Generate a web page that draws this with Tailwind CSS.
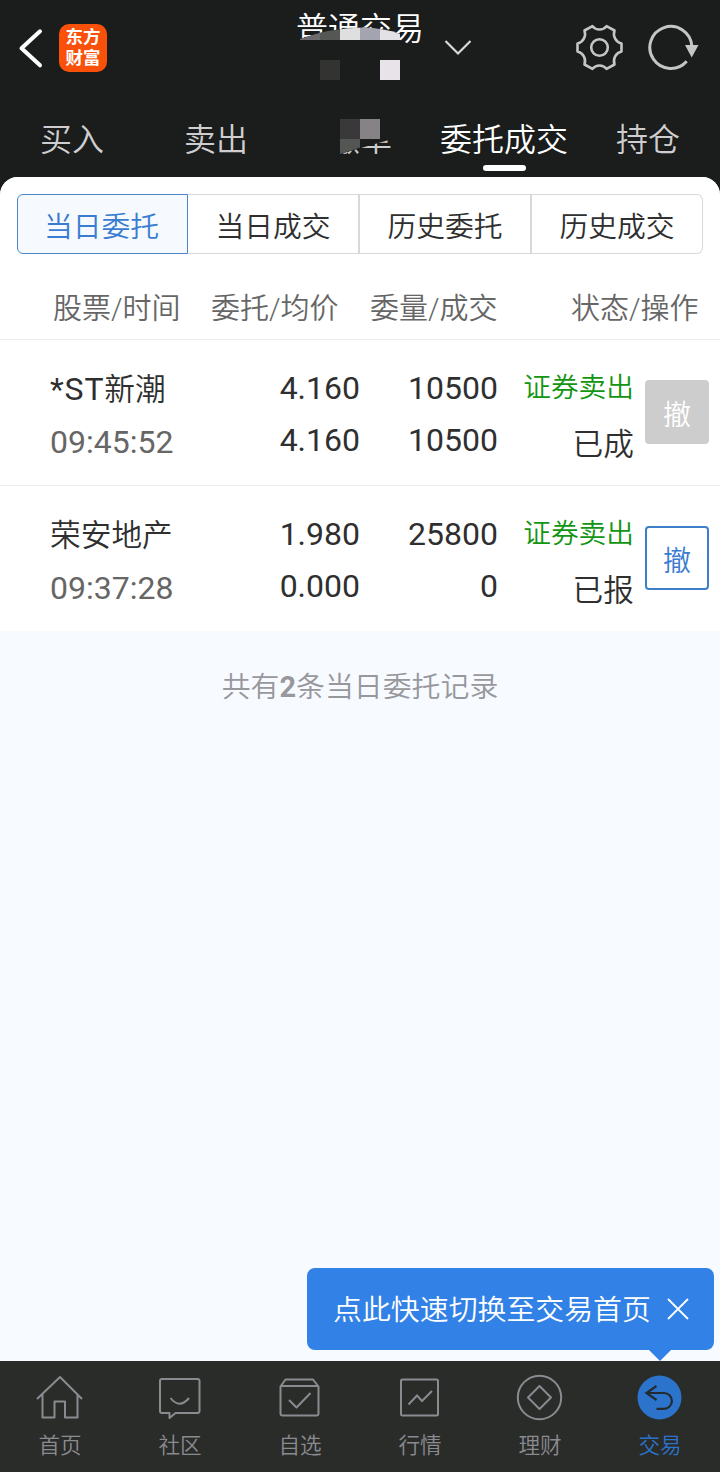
<!DOCTYPE html>
<html lang="zh-CN">
<head>
  <meta charset="UTF-8" />
  <meta name="viewport" content="width=device-width, initial-scale=1" />
  <title>普通交易 - 委托成交</title>
  <script src="https://cdn.jsdelivr.net/npm/@tailwindcss/browser@4"></script>
  <style>
    body {
      font-family: Roboto, "Noto Sans CJK SC", sans-serif;
      font-weight: 350;
    }
    .cjk {
      font-family: "Noto Sans CJK SC", sans-serif;
    }
  </style>
</head>
<body>
  <div class="w-[720px] h-[1472px] flex flex-col bg-[#1a1d1b] overflow-hidden">

    <!-- top bar -->
    <header class="cjk relative h-[177px] flex flex-col">
      <div class="h-[96px] flex items-center">
        <svg class="ml-[16px] w-[30px] h-[48px]" viewBox="0 0 30 48" fill="none" stroke="#fff" stroke-width="4" stroke-linecap="round" stroke-linejoin="round">
          <path d="M24 7 5.5 24 24 41" transform="translate(0 .3)" />
        </svg>
        <div class="ml-[13px] w-[48px] h-[48px] rounded-[10px] bg-[#f9500a] text-white font-bold text-[17.500px] leading-[20.500px] text-center pt-[2px]">东方<br>财富</div>
        <h1 class="ml-[189px] w-[128px] h-[96px] pt-[6px] text-white text-[32px] leading-[40px] whitespace-nowrap">普通交易</h1>
        <svg class="ml-[20px] w-[28px] h-[18px]" viewBox="0 0 28 18" fill="none" stroke="#d8d8d8" stroke-width="2.2">
          <path d="M1.5 2 14 14.5 26.500 2" />
        </svg>
        <svg class="ml-[103px] w-[48px] h-[48px]" viewBox="-24.500 -23.500 48 48" fill="none" stroke="#c6c5c6" stroke-width="2.600" stroke-linejoin="round">
          <path d="M22-4V4A10 10 0 0 0 15 17L7 21.300A9 9 0 0 0-7 21.300L-15 17A10 10 0 0 0-22 4V-4A10 10 0 0 0-15-17L-7-21.300A9 9 0 0 0 7-21.300L15-17A10 10 0 0 0 22-4Z" />
          <circle r="8.300" />
        </svg>
        <svg class="ml-[24px] w-[52px] h-[48px]" viewBox="0 0 52 48" fill="none" stroke="#c6c5c6" stroke-width="3">
          <path d="M39.700 37.200A21 21 0 1 1 44.800 22" />
          <path d="M38 21H51.500L44.700 33.500Z" fill="#c6c5c6" stroke="none" />
        </svg>
      </div>
      <nav class="h-[81px] grid grid-cols-5 text-[32px] leading-[40px] text-[#cfcdd0] text-center pt-[21px] whitespace-nowrap">
        <a href="#">买入</a>
        <a href="#">卖出</a>
        <a href="#">撤单</a>
        <a href="#" class="text-white flex flex-col items-center">委托成交<i class="mt-[8px] w-[43px] h-[6px] rounded-full bg-white"></i></a>
        <a href="#">持仓</a>
      </nav>
      <!-- privacy mosaic over the account name -->
      <svg class="absolute left-[290px] top-0 w-[120px] h-[160px]" viewBox="290 0 120 160">
        <clipPath id="arc"><path d="M300 39Q330 28 362 27.500Q385 28 400 34V40H300Z" /></clipPath>
        <path d="M300 39Q330 28 362 27.500Q385 28 400 34V40L404 41V60H290V43Z" fill="#1a1d1b" />
        <g clip-path="url(#arc)">
          <path d="M300 20h20v20h-20z" fill="#6c6c6e" />
          <path d="M320 20h20v20h-20z" fill="#555755" />
          <path d="M340 20h20v20h-20z" fill="#dfdfdf" />
          <path d="M360 20h20v20h-20z" fill="#a3a4af" />
          <path d="M380 20h20v20h-20z" fill="#e4e1e6" />
        </g>
        <path d="M320 60h20v20h-20z" fill="#333432" />
        <path d="M380 60h20v20h-20z" fill="#e7e3e8" />
        <path d="M324 119H396V138L340 154H324Z" fill="#1a1d1b" />
        <path d="M340 119h20v20h-20z" fill="#3a3939" />
        <path d="M360 119h20v20h-20z" fill="#868386" />
        <path d="M340 139h20v8.500L340 154z" fill="#535653" />
      </svg>
    </header>

    <main class="flex-1 flex flex-col rounded-t-[18px] bg-[#f7faff] overflow-hidden">
      <section class="bg-white">
        <div class="cjk px-[17px] pt-[17px] h-[93px]">
          <div class="h-[60px] flex text-[28.800px] text-[#2f2f2f] text-center">
            <button class="w-[171px] pr-[2px] border border-[#4a86c5] rounded-l-[6px] bg-[#f6faff] text-[#3a7cd0] leading-[60px]">当日委托</button>
            <button class="w-[172px] border-y border-r-2 border-[#d8d8dc] leading-[60px]">当日成交</button>
            <button class="w-[172px] border-y border-r-2 border-[#d8d8dc] leading-[60px]">历史委托</button>
            <button class="w-[171px] border-y border-r border-[#d8d8dc] rounded-r-[6px] leading-[60px]">历史成交</button>
          </div>
        </div>
        <div class="h-[70px] pt-[10px] flex items-center border-b border-[#ececec] text-[29px] text-[#666] whitespace-nowrap">
          <span class="ml-[53px] w-[158px]">股票/时间</span>
          <span class="w-[159px]">委托/均价</span>
          <span class="w-[201px]">委量/成交</span>
          <span>状态/操作</span>
        </div>

        <div class="h-[146px] flex border-b border-[#ececec] text-[32px] leading-[52px] text-[#2f2f2f] whitespace-nowrap">
          <div class="ml-[50px] w-[150px] pt-[23px]">
            <p class="font-normal"><span class="tracking-[0.8px]">*ST</span><span class="text-[30.700px] font-[350]">新潮</span></p>
            <p class="text-[#666] font-normal">09:45:52</p>
          </div>
          <div class="w-[160px] pt-[22px] text-right font-normal"><p>4.160</p><p>4.160</p></div>
          <div class="w-[138px] pt-[22px] text-right font-normal"><p>10500</p><p>10500</p></div>
          <div class="w-[136px] pt-[22px] text-right">
            <p class="text-[27.700px] text-[#129512]">证券卖出</p>
            <p class="text-[30.700px] pt-[5px]">已成</p>
          </div>
          <button class="cjk ml-[11px] mt-[40px] w-[64px] h-[64px] rounded-[4px] bg-[#cdcdcd] text-white text-[28px] leading-[66px]">撤</button>
        </div>
        <div class="h-[145px] flex text-[32px] leading-[52px] text-[#2f2f2f] whitespace-nowrap">
          <div class="ml-[50px] w-[150px] pt-[24px]">
            <p class="text-[30.700px]">荣安地产</p>
            <p class="text-[#666] font-normal">09:37:28</p>
          </div>
          <div class="w-[160px] pt-[22px] text-right font-normal"><p>1.980</p><p>0.000</p></div>
          <div class="w-[138px] pt-[22px] text-right font-normal"><p>25800</p><p>0</p></div>
          <div class="w-[136px] pt-[22px] text-right">
            <p class="text-[27.700px] text-[#129512]">证券卖出</p>
            <p class="text-[30.700px] pt-[5px]">已报</p>
          </div>
          <button class="cjk ml-[11px] mt-[40px] w-[64px] h-[64px] rounded-[4px] border-2 border-[#3f7fca] text-[#3a7cd0] text-[28px] leading-[62px]">撤</button>
        </div>
      </section>

      <p class="pt-[36px] text-center text-[28.900px] leading-[40px] text-[#97979c]">共有<b class="font-bold">2</b>条当日委托记录</p>
    </main>

    <footer class="cjk relative h-[111px] grid grid-cols-6 bg-[#2a2c2a] text-[#8b8a90] text-[21.600px] leading-[30px] text-center">
      <!-- tooltip -->
      <div class="absolute left-[307px] -top-[93px] w-[407px] h-[82px] rounded-[8px] bg-[#3281e6] text-white text-[28.900px] flex items-center whitespace-nowrap">
        <span class="ml-[26px] w-[318px] pb-[4px]">点此快速切换至交易首页</span>
        <svg class="ml-[16px] w-[22px] h-[22px]" viewBox="0 0 22 22" stroke="#fff" stroke-width="1.800"><path d="M1 1 21 21M21 1 1 21" /></svg>
        <svg class="absolute left-[341px] top-[82px] w-[24px] h-[11px]" viewBox="0 0 24 11"><path d="M1 0H23L12 11Z" fill="#3281e6" /></svg>
      </div>

      <a href="#" class="flex flex-col items-center pt-[12px]">
        <svg class="w-[48px] h-[48px]" viewBox="0 0 48 48" fill="none" stroke="currentColor" stroke-width="2" stroke-linejoin="round">
          <path d="M1 26 24 4 46 26M6.500 21.500V44.500H18.500V28.500H29V44.500H41.500V21.500" />
        </svg>
        <span class="mt-[8px]">首页</span>
      </a>
      <a href="#" class="flex flex-col items-center pt-[12px]">
        <svg class="w-[48px] h-[48px]" viewBox="0 0 48 48" fill="none" stroke="currentColor" stroke-width="2" stroke-linejoin="round">
          <path d="M6 6H41.500Q43.500 6 43.500 8V38Q43.500 40 41.500 40H19.500L13.500 45V40H6Q4 40 4 38V8Q4 6 6 6ZM14.500 25Q23.500 36.500 33 25" />
        </svg>
        <span class="mt-[8px]">社区</span>
      </a>
      <a href="#" class="flex flex-col items-center pt-[12px]">
        <svg class="w-[48px] h-[48px]" viewBox="0 0 48 48" fill="none" stroke="currentColor" stroke-width="2" stroke-linejoin="round">
          <path d="M4.500 13.500 9.500 6.500H37L42.500 13.500V40.500Q42.500 42.500 40.500 42.500H6.500Q4.500 42.500 4.500 40.500ZM4.500 13H42.500M13 27 20.500 34.500 34.500 20" />
        </svg>
        <span class="mt-[8px]">自选</span>
      </a>
      <a href="#" class="flex flex-col items-center pt-[12px]">
        <svg class="w-[48px] h-[48px]" viewBox="0 0 48 48" fill="none" stroke="currentColor" stroke-width="2">
          <rect x="5" y="6.500" width="37" height="36" rx="1.500" />
          <path d="M12.500 31.500 21 22.500 26 28 36 18" />
        </svg>
        <span class="mt-[8px]">行情</span>
      </a>
      <a href="#" class="flex flex-col items-center pt-[12px]">
        <svg class="w-[48px] h-[48px]" viewBox="0 0 48 48" fill="none" stroke="currentColor" stroke-width="2" stroke-linejoin="round">
          <circle cx="23.500" cy="24.500" r="21.700" />
          <path d="M23.500 13 35 24.500 23.500 36 12 24.500Z" />
        </svg>
        <span class="mt-[8px]">理财</span>
      </a>
      <a href="#" class="flex flex-col items-center pt-[12px] text-[#2b73cb]">
        <svg class="w-[48px] h-[48px]" viewBox="0 0 48 48" fill="none" stroke="#232a31" stroke-width="2.200">
          <circle cx="23.500" cy="24.500" r="22" fill="#2b73cb" stroke="none" />
          <path d="M20.500 13 10.500 20 20.500 27M10.500 20H28A7.900 7.900 0 0 1 28 35.800H20.500" />
        </svg>
        <span class="mt-[8px]">交易</span>
      </a>
    </footer>
  </div>
</body>
</html>
